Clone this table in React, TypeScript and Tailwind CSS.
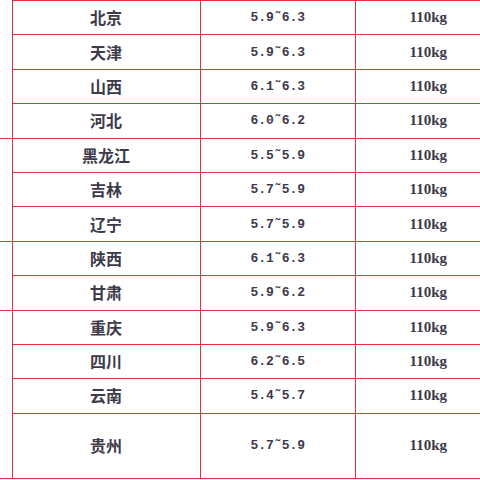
const groups = [
  {
    rows: [
      { name: "北京", range: "5.9˜6.3", weight: "110kg" },
      { name: "天津", range: "5.9˜6.3", weight: "110kg" },
      { name: "山西", range: "6.1˜6.3", weight: "110kg" },
      { name: "河北", range: "6.0˜6.2", weight: "110kg" },
    ],
  },
  {
    rows: [
      { name: "黑龙江", range: "5.5˜5.9", weight: "110kg" },
      { name: "吉林", range: "5.7˜5.9", weight: "110kg" },
      { name: "辽宁", range: "5.7˜5.9", weight: "110kg" },
    ],
  },
  {
    rows: [
      { name: "陕西", range: "6.1˜6.3", weight: "110kg" },
      { name: "甘肃", range: "5.9˜6.2", weight: "110kg" },
    ],
  },
  {
    rows: [
      { name: "重庆", range: "5.9˜6.3", weight: "110kg" },
      { name: "四川", range: "6.2˜6.5", weight: "110kg" },
      { name: "云南", range: "5.4˜5.7", weight: "110kg" },
      { name: "贵州", range: "5.7˜5.9", weight: "110kg", tall: true },
    ],
  },
];

export default function App() {
  return (
    <div className="w-[480px] h-[480px] overflow-hidden bg-white">
      <table className="border-collapse w-[523px] table-fixed text-[#3d3a4a]">
        <colgroup>
          <col className="w-[12px]" />
          <col className="w-[188px]" />
          <col className="w-[155px]" />
          <col className="w-[168px]" />
        </colgroup>
        <tbody>
          {groups.map((group, gi) =>
            group.rows.map((row, ri) => (
              <tr key={`${gi}-${ri}`} className={row.tall ? "h-[65px]" : "h-[34.4px]"}>
                {/* 左侧合并的地区列，只露出一小条 */}
                {ri === 0 && (
                  <td
                    rowSpan={group.rows.length}
                    className="border-r border-b border-[#e8303a] p-0"
                  />
                )}
                <td className="border border-[#e8303a] p-0 pb-[1px] text-center text-[16px] font-bold font-['Noto_Sans_CJK_SC',sans-serif] leading-none">
                  {row.name}
                </td>
                <td className="border border-[#e8303a] p-0 pl-[50px] text-left text-[13px] font-bold font-['Liberation_Mono',monospace] leading-none">
                  {row.range}
                </td>
                <td className="border-y border-l border-[#e8303a] p-0 pl-[54px] text-left text-[15px] font-bold font-['Liberation_Serif',serif] leading-none">
                  {row.weight}
                </td>
              </tr>
            ))
          )}
        </tbody>
      </table>
    </div>
  );
}
